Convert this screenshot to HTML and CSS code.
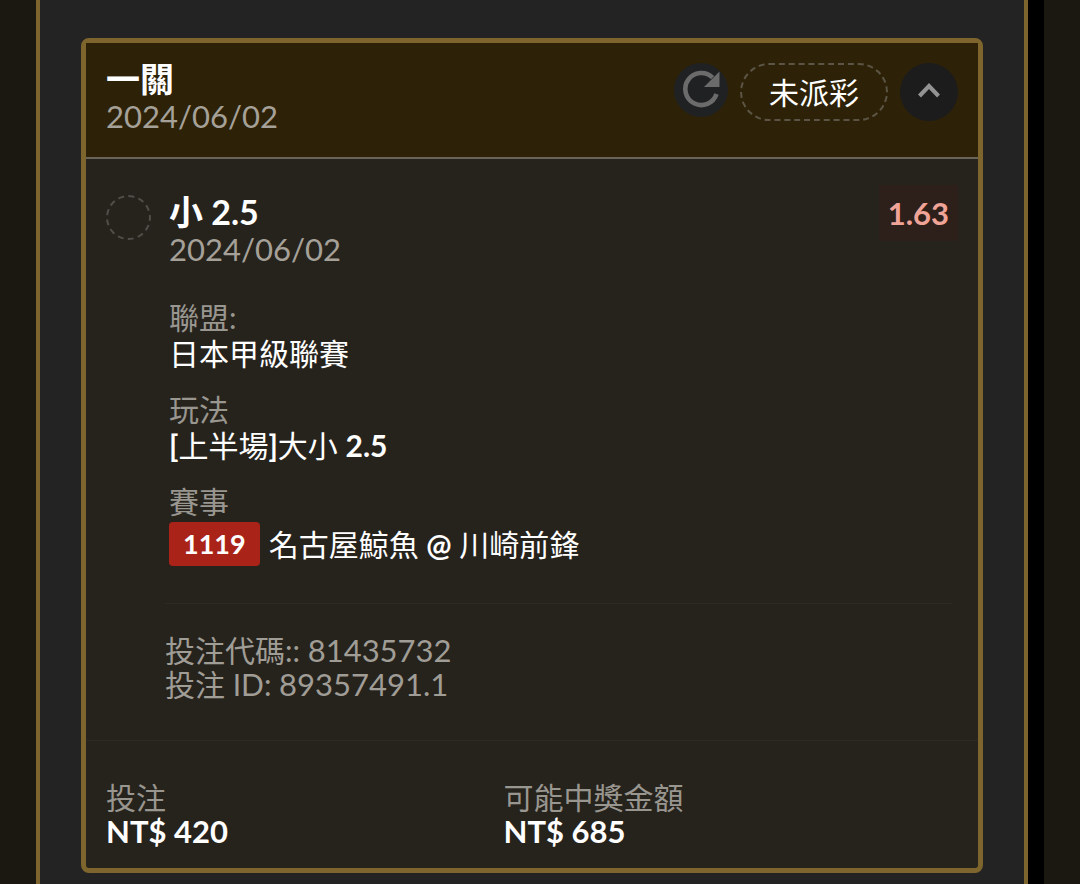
FILE: index.html
```html
<!DOCTYPE html>
<html lang="zh-Hant">
<head>
  <meta charset="UTF-8" />
  <meta name="viewport" content="width=device-width, initial-scale=1" />
  <title>投注紀錄</title>
  <link rel="stylesheet" href="styles.css">
</head>
<body>
  <div class="frame">
    <main class="panel">
      <article class="ticket">
        <header class="ticket-head">
          <div class="head-info">
            <h1>一關</h1>
            <p class="date">2024/06/02</p>
          </div>
          <div class="actions">
            <button type="button" class="icon-btn refresh" aria-label="重新整理">
              <svg width="40" height="40" viewBox="0 0 40 40">
                <path d="M31.600 7.700A16 16 0 1 0 35.500 24" fill="none" stroke="#6b6b6b" stroke-width="4.600" />
                <path d="M38.500 1.500V17H23Z" fill="#6b6b6b" />
              </svg>
            </button>
            <span class="status">未派彩</span>
            <button type="button" class="icon-btn toggle" aria-label="收合" aria-expanded="true">
              <svg width="24" height="18" viewBox="0 0 24 18">
                <path d="M2.500 13L12 3L21.500 13" fill="none" stroke="#939393" stroke-width="4" />
              </svg>
            </button>
          </div>
        </header>

        <section class="bet">
          <span class="marker"></span>
          <div class="bet-body">
            <div class="bet-top">
              <div class="bet-name">
                <h2>小 2.5</h2>
                <p class="date">2024/06/02</p>
              </div>
              <span class="odds">1.63</span>
            </div>
            <dl class="details">
              <div>
                <dt>聯盟:</dt>
                <dd>日本甲級聯賽</dd>
              </div>
              <div>
                <dt>玩法</dt>
                <dd><b>[</b>上半場<b>]</b>大小 <b>2.5</b></dd>
              </div>
              <div>
                <dt>賽事</dt>
                <dd class="match">
                  <span class="match-no">1119</span>
                  <span>名古屋鯨魚 <b>@</b> 川崎前鋒</span>
                </dd>
              </div>
            </dl>
            <div class="codes">
              <p>投注代碼:: <span class="code">81435732</span></p>
              <p>投注 ID: <span class="code">89357491.1</span></p>
            </div>
          </div>
        </section>

        <footer>
          <dl class="totals">
            <div>
              <dt>投注</dt>
              <dd>NT$ 420</dd>
            </div>
            <div>
              <dt>可能中獎金額</dt>
              <dd>NT$ 685</dd>
            </div>
          </dl>
        </footer>
      </article>
    </main>
  </div>
</body>
</html>
```
FILE: styles.css
```css
* {
  box-sizing: border-box;
}

body {
  margin: 0;
  background: #1b1811;
  color: #fff;
  font-family: Lato, "Noto Sans CJK TC", sans-serif;
  font-size: 30px;
  line-height: 36px;
}

h1, h2, p, dl, dd {
  margin: 0;
}

.frame {
  margin: 0 36px;
  border-right: 16px solid #000;
}

.panel {
  min-height: 100vh;
  padding: 38px 41px 12px;
  background: #232323;
  border: solid #7e652d;
  border-width: 0 4px;
}

.ticket {
  background: #26231d;
  border: 5px solid #7e652d;
  border-radius: 8px;
}

.ticket-head {
  display: flex;
  justify-content: space-between;
  padding: 17px 20px 23px;
  background: #2d2208;
  border-bottom: 2px solid #69635a;
}

h1, h2 {
  font-size: 34px;
  line-height: 38px;
}

.date {
  color: #a5a199;
  font-size: 31px;
}

.actions {
  display: flex;
  align-items: flex-start;
  gap: 12px;
  margin-top: 3px;
}

.icon-btn {
  display: flex;
  align-items: center;
  justify-content: center;
  padding: 0;
  border: none;
  border-radius: 50%;
  background: #1c1c1d;
  cursor: pointer;
}

.refresh {
  width: 54px;
  height: 54px;
  background: #202123;
}

.toggle {
  width: 58px;
  height: 58px;
}

.status {
  padding: 9px 27px;
  border: 2px dashed #5c5444;
  border-radius: 30px;
}

.bet {
  display: flex;
  gap: 18px;
  padding: 26px 20px 39px;
}

.marker {
  flex: none;
  width: 45px;
  height: 45px;
  margin-top: 10px;
  border: 2px dashed #504e49;
  border-radius: 50%;
}

.bet-body {
  flex: 1;
}

.bet-top {
  display: flex;
  justify-content: space-between;
  align-items: flex-start;
}

.bet-name {
  padding-top: 8px;
}

.odds {
  padding: 10px 9px;
  background: #2d201b;
  color: #f0a497;
  font-size: 31px;
  font-weight: bold;
}

.details {
  display: grid;
  gap: 20px;
  padding: 32px 0 37px;
}

dt {
  color: #999690;
}

.match {
  display: flex;
  align-items: center;
  gap: 9px;
  margin-top: 3px;
}

.match-no {
  padding: 4px 14px;
  border-radius: 4px;
  background: #a92318;
  font-size: 27px;
  font-weight: bold;
}

.codes {
  margin-right: 6px;
  margin-left: -4px;
  padding-top: 29px;
  border-top: 1px solid #2d2a25;
  color: #a09d97;
  line-height: 34px;
}

.code {
  display: inline-block;
  font-size: 31px;
}

.totals {
  display: grid;
  grid-template-columns: 7fr 8fr;
  padding: 39px 20px 20px;
  border-top: 1px solid #2d2a25;
  line-height: 34px;
}

.totals dd {
  font-size: 31px;
  font-weight: bold;
}
```
